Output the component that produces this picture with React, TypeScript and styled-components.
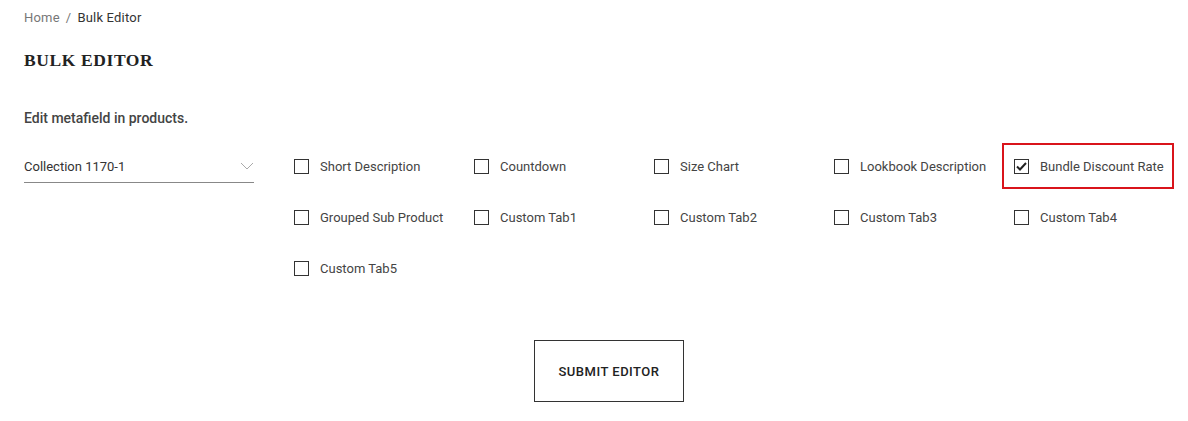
import React from 'react'
import styled, { createGlobalStyle } from 'styled-components'

const GlobalStyle = createGlobalStyle`
  body {
    margin: 0;
    background: #fff;
    font-family: Roboto, "Liberation Sans", sans-serif;
    color: #333;
  }
`

const Page = styled.div`
  padding: 9px 0 0 24px;
`

const Breadcrumb = styled.div`
  display: flex;
  gap: 6px;
  font-size: 13px;
  line-height: 18px;
  color: #333;
`

const Crumb = styled.span<{ $muted?: boolean }>`
  color: ${p => (p.$muted ? '#777' : '#333')};
  letter-spacing: 0.2px;
`

const Title = styled.h1`
  margin: 22px 0 0;
  font-family: "Liberation Serif", serif;
  font-weight: bold;
  font-size: 17.5px;
  line-height: 22px;
  letter-spacing: 0.6px;
  color: #222;
`

const Intro = styled.p`
  margin: 37px 0 0;
  font-size: 14px;
  font-weight: 500;
  line-height: 20px;
  color: #444;
`

const FormRow = styled.div`
  display: flex;
  margin-top: 27px;
`

const SelectBox = styled.div`
  width: 230px;
  height: 28px;
  flex-shrink: 0;
  display: flex;
  align-items: center;
  justify-content: space-between;
  border-bottom: 1px solid #888;
  font-size: 13px;
  color: #333;
  box-sizing: border-box;
  padding-bottom: 5px;
`

const Grid = styled.div`
  margin-left: 40px;
  display: grid;
  grid-template-columns: repeat(5, 180px);
  grid-auto-rows: 51px;
  margin-top: -12px;
`

const Option = styled.label<{ $highlight?: boolean }>`
  display: flex;
  align-items: center;
  gap: 11px;
  font-size: 13px;
  color: #444;
  height: 46px;
  margin-left: ${p => (p.$highlight ? '-12px' : '0')};
  padding-left: ${p => (p.$highlight ? '10px' : '0')};
  width: ${p => (p.$highlight ? '172px' : 'auto')};
  box-sizing: border-box;
  border: ${p => (p.$highlight ? '2px solid #d9141b' : 'none')};
`

const Box = styled.span`
  width: 15px;
  height: 15px;
  box-sizing: border-box;
  border: 1px solid #333;
  display: flex;
  align-items: center;
  justify-content: center;
  flex-shrink: 0;
`

const Actions = styled.div`
  display: flex;
  justify-content: center;
  padding-left: 6px;
  margin-top: 44px;
`

const Submit = styled.button`
  width: 150px;
  height: 62px;
  background: #fff;
  border: 1px solid #333;
  font-family: Roboto, "Liberation Sans", sans-serif;
  font-size: 13px;
  font-weight: 500;
  letter-spacing: 0.5px;
  color: #222;
`

const options = [
  'Short Description',
  'Countdown',
  'Size Chart',
  'Lookbook Description',
  'Bundle Discount Rate',
  'Grouped Sub Product',
  'Custom Tab1',
  'Custom Tab2',
  'Custom Tab3',
  'Custom Tab4',
  'Custom Tab5',
]

const App = () => {
  return (
    <>
      <GlobalStyle />
      <Page>
        <Breadcrumb>
          <Crumb $muted>Home</Crumb>
          <Crumb $muted>/</Crumb>
          <Crumb>Bulk Editor</Crumb>
        </Breadcrumb>
        <Title>BULK EDITOR</Title>
        <Intro>Edit metafield in products.</Intro>
        <FormRow>
          <SelectBox>
            <span>Collection 1170-1</span>
            <svg width="14" height="8" viewBox="0 0 14 8">
              <path d="M1 1 L7 7 L13 1" fill="none" stroke="#aaa" strokeWidth="1" />
            </svg>
          </SelectBox>
          <Grid>
            {options.map(name => {
              const checked = name === 'Bundle Discount Rate'
              return (
                <Option key={name} $highlight={checked}>
                  <Box>
                    {checked && (
                      <svg width="11" height="9" viewBox="0 0 11 9">
                        <path d="M1 4.5 L4 7.5 L10 1" fill="none" stroke="#222" strokeWidth="2" />
                      </svg>
                    )}
                  </Box>
                  {name}
                </Option>
              )
            })}
          </Grid>
        </FormRow>
        <Actions>
          <Submit>SUBMIT EDITOR</Submit>
        </Actions>
      </Page>
    </>
  )
}

export default App
